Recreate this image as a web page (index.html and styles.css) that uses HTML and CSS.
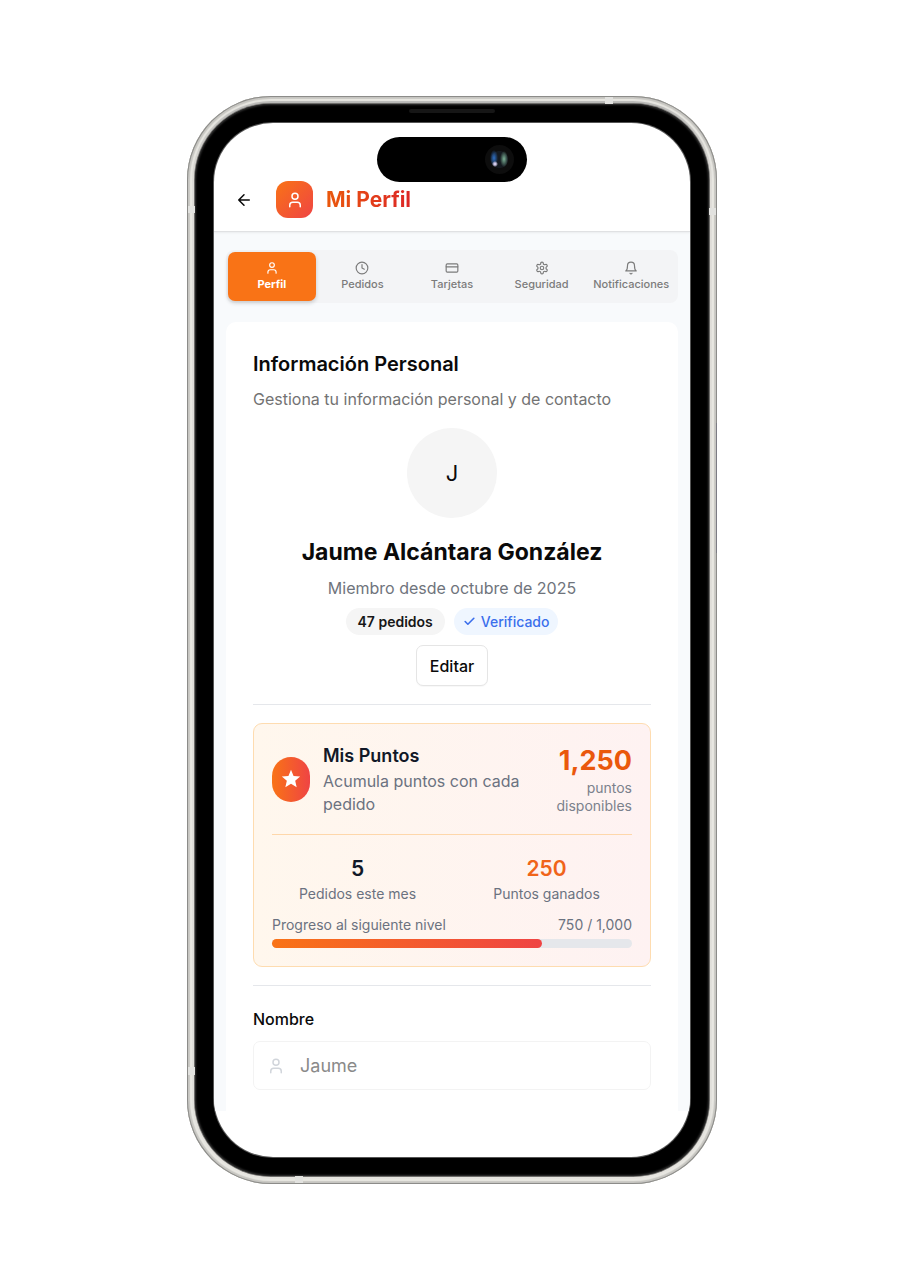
FILE: index.html
```html
<!DOCTYPE html>
<html lang="es">
<head>
<meta charset="utf-8">
<meta name="viewport" content="width=device-width, initial-scale=1">
<title>Mi Perfil</title>
<link rel="stylesheet" href="styles.css">
</head>
<body>
<svg class="sprite" aria-hidden="true">
  <symbol id="person" viewBox="0 0 24 24"><path d="M19 21v-2a4 4 0 0 0-4-4H9a4 4 0 0 0-4 4v2"/><circle cx="12" cy="7" r="4"/></symbol>
</svg>
<div class="phone">
  <span class="antenna antenna-top"></span>
  <span class="antenna antenna-left"></span>
  <span class="antenna antenna-right"></span>
  <span class="antenna antenna-left-low"></span>
  <span class="antenna antenna-bottom"></span>
  <span class="power"></span>
  <div class="bezel">
    <span class="speaker"></span>
    <div class="island"><span class="camera"></span></div>
    <div class="screen">
      <header class="topbar">
        <button class="back" type="button" aria-label="Volver"><svg class="icon" viewBox="0 0 24 24"><path d="m12 19-7-7 7-7M19 12H5"/></svg></button>
        <span class="logo"><svg class="icon" aria-hidden="true"><use href="#person"/></svg></span>
        <h1 class="title">Mi Perfil</h1>
      </header>
      <main class="content">
        <nav class="tabs" aria-label="Secciones">
          <button class="tab active" type="button"><svg class="icon"><use href="#person"/></svg>Perfil</button>
          <button class="tab" type="button"><svg class="icon" viewBox="0 0 24 24"><circle cx="12" cy="12" r="10"/><path d="M12 6v6l4 2"/></svg>Pedidos</button>
          <button class="tab" type="button"><svg class="icon" viewBox="0 0 24 24"><rect x="2" y="5" width="20" height="14" rx="2"/><path d="M2 10h20"/></svg>Tarjetas</button>
          <button class="tab" type="button"><svg class="icon" viewBox="0 0 24 24"><path d="M12.22 2h-.44a2 2 0 0 0-2 2v.18a2 2 0 0 1-1 1.73l-.43.25a2 2 0 0 1-2 0l-.15-.08a2 2 0 0 0-2.73.73l-.22.38a2 2 0 0 0 .73 2.73l.15.1a2 2 0 0 1 1 1.72v.51a2 2 0 0 1-1 1.74l-.15.09a2 2 0 0 0-.73 2.73l.22.38a2 2 0 0 0 2.73.73l.15-.08a2 2 0 0 1 2 0l.43.25a2 2 0 0 1 1 1.73V20a2 2 0 0 0 2 2h.44a2 2 0 0 0 2-2v-.18a2 2 0 0 1 1-1.73l.43-.25a2 2 0 0 1 2 0l.15.08a2 2 0 0 0 2.73-.73l.22-.39a2 2 0 0 0-.73-2.73l-.15-.08a2 2 0 0 1-1-1.74v-.5a2 2 0 0 1 1-1.74l.15-.09a2 2 0 0 0 .73-2.73l-.22-.38a2 2 0 0 0-2.73-.73l-.15.08a2 2 0 0 1-2 0l-.43-.25a2 2 0 0 1-1-1.73V4a2 2 0 0 0-2-2z"/><circle cx="12" cy="12" r="3"/></svg>Seguridad</button>
          <button class="tab" type="button"><svg class="icon" viewBox="0 0 24 24"><path d="M6 8a6 6 0 0 1 12 0c0 7 3 9 3 9H3s3-2 3-9M10.3 21a1.94 1.94 0 0 0 3.4 0"/></svg>Notificaciones</button>
        </nav>
        <section class="card">
          <h2 class="heading">Información Personal</h2>
          <p class="lead">Gestiona tu información personal y de contacto</p>
          <div class="profile">
            <div class="avatar">J</div>
            <h3 class="name">Jaume Alcántara González</h3>
            <p class="since">Miembro desde octubre de 2025</p>
            <div class="badges">
              <span class="badge">47 pedidos</span>
              <span class="badge verified"><svg class="icon" viewBox="0 0 24 24"><path d="M20 6 9 17l-5-5"/></svg>Verificado</span>
            </div>
            <button class="edit" type="button">Editar</button>
          </div>
          <hr class="rule">
          <section class="points">
            <div class="summary">
              <span class="star"><svg viewBox="0 0 24 24"><path d="M12 17.300 18.200 21l-1.640-7.030L22 9.240l-7.190-.61L12 2 9.190 8.630 2 9.240l5.460 4.730L5.820 21z"/></svg></span>
              <div class="about">
                <h4 class="points-title">Mis Puntos</h4>
                <p class="points-text">Acumula puntos con cada pedido</p>
              </div>
              <div class="balance"><strong class="total">1,250</strong><span class="unit">puntos disponibles</span></div>
            </div>
            <div class="stats">
              <div class="stat"><strong class="value">5</strong><span>Pedidos este mes</span></div>
              <div class="stat"><strong class="value earned">250</strong><span>Puntos ganados</span></div>
            </div>
            <div class="level"><span>Progreso al siguiente nivel</span><span>750 / 1,000</span></div>
            <div class="track"><div class="fill" style="width:75%"></div></div>
          </section>
          <hr class="rule">
          <label class="label" for="nombre">Nombre</label>
          <div class="field">
            <svg class="icon" aria-hidden="true"><use href="#person"/></svg>
            <input class="input" id="nombre" type="text" value="Jaume" disabled>
          </div>
        </section>
      </main>
    </div>
  </div>
</div>
</body>
</html>
```
FILE: styles.css
```css
* { box-sizing: border-box; }
body { margin: 0; padding: 96px 16px; background: #fff; color: #0a0a0a; font-family: Inter, "Liberation Sans", sans-serif; }
h1, h2, h3, h4, p { margin: 0; }
button { font: inherit; color: inherit; padding: 0; border: 0; background: none; }
.sprite { position: absolute; width: 0; height: 0; }
.icon { fill: none; stroke: currentColor; stroke-width: 2; stroke-linecap: round; stroke-linejoin: round; flex: none; }

.phone { position: relative; max-width: 530px; margin: 0 auto; padding: 8px; border-radius: 84px; background: linear-gradient(#b5b5b3, #dedcd7 8%, #e0dfda 92%, #e6e4df); box-shadow: inset 0 0 0 1px #8c8c89, inset 0 0 0 2px #c6c5c1, inset 0 0 1px 3px #c9c8c3, inset 0 0 1px 5px #e9e8e3; }
.bezel { position: relative; padding: 19px; border-radius: 76px; background: #000; box-shadow: 0 0 0 1px #6d6c6a, inset 0 0 2px 1px #333; }
.screen { min-height: 1034px; border-radius: 59px; background: #fff; overflow: hidden; box-shadow: 0 0 0 1px #555; }
.antenna { position: absolute; z-index: 1; background: #e2e2df; }
.antenna-top { top: 1px; right: 104px; width: 8px; height: 7px; }
.antenna-left { top: 110px; left: 1px; width: 7px; height: 7px; }
.antenna-right { top: 112px; right: 1px; width: 7px; height: 7px; }
.antenna-left-low { bottom: 109px; left: 1px; width: 7px; height: 8px; }
.antenna-bottom { bottom: 1px; left: 108px; width: 8px; height: 7px; }
.power { position: absolute; top: 327px; right: 0; width: 1px; height: 130px; background: #7c7c84; }
.speaker { position: absolute; top: 5px; left: 50%; width: 86px; height: 4px; margin-left: -43px; border-radius: 2px; background: #161616; }
.island { position: absolute; z-index: 2; top: 33px; left: 50%; width: 150px; height: 45px; margin-left: -75px; padding: 8px 13px; border-radius: 23px; background: #000; display: flex; justify-content: flex-end; }
.camera { width: 29px; height: 29px; border-radius: 50%; background: radial-gradient(circle at 10px 19px, #d5ccec 0 1px, transparent 3px), radial-gradient(ellipse 4px 8px at 19px 14px, #7db397, transparent), radial-gradient(ellipse 4px 8px at 9px 13px, #2e6fc4, transparent), radial-gradient(circle, #151a20 0 8px, #0d0d0d 9px); }

.topbar { position: relative; display: flex; align-items: center; height: 109px; padding: 58px 21px 13px; border-bottom: 1px solid #e0e1e3; box-shadow: 0 1px 2px #0000000f; }
.back { display: flex; width: 18px; margin-right: 23px; }
.back .icon { width: 18px; height: 18px; }
.logo { display: grid; place-items: center; width: 37px; height: 37px; margin-right: 13px; border-radius: 12px; background: linear-gradient(135deg, #f97316, #ef4444); color: #fff; }
.logo .icon { width: 18px; height: 18px; }
.title { font-size: 21px; line-height: 30px; font-weight: 700; background: linear-gradient(90deg, #ea580c, #dc2626); background-clip: text; -webkit-background-clip: text; color: transparent; }

.content { padding: 18px 12px 0; background: #f8fafc; }
.tabs { display: grid; grid-template-columns: repeat(5, minmax(0, 1fr)); height: 53px; padding: 2px; border-radius: 8px; background: #f3f4f6; }
.tab { display: flex; flex-direction: column; align-items: center; justify-content: center; gap: 2px; border-radius: 7px; font-size: 11px; line-height: 15px; font-weight: 500; color: #7b7b7b; }
.tab .icon { width: 14px; height: 14px; }
.tab.active { margin-right: 2px; color: #fff; font-weight: 700; background: #f97316; box-shadow: 0 2px 4px #0000002e; }

.card { margin-top: 19px; padding: 27px 27px 21px; border-radius: 10px 10px 0 0; background: #fff; }
.heading { font-size: 20px; line-height: 30px; font-weight: 600; }
.lead, .since { font-size: 16px; line-height: 24px; color: #737373; }
.lead { margin-top: 8px; }
.profile { display: flex; flex-direction: column; align-items: center; margin-top: 17px; }
.avatar { display: grid; place-items: center; width: 90px; height: 90px; border-radius: 50%; background: #f5f5f5; font-size: 22px; }
.name { margin-top: 18px; font-size: 23px; line-height: 32px; font-weight: 700; }
.since { margin-top: 8px; color: #6f747c; }
.badges { display: flex; gap: 9px; margin-top: 8px; }
.badge { display: flex; align-items: center; gap: 5px; height: 27px; padding: 0 12px; border-radius: 14px; background: #f5f5f5; font-size: 14px; font-weight: 600; color: #171717; }
.verified { padding: 0 9px; background: #eff6ff; color: #3b6fec; font-weight: 500; }
.verified .icon { width: 13px; height: 13px; stroke-width: 3; }
.edit { margin-top: 10px; height: 41px; padding: 0 13px; border: 1px solid #e5e5e5; border-radius: 7px; background: #fff; font-size: 16px; font-weight: 500; box-shadow: 0 1px 1px #00000008; }
.rule { height: 1px; margin: 18px 0; border: 0; background: #e5e7eb; }

.points { padding: 18px; border: 1px solid #fedcb0; border-radius: 9px; background: linear-gradient(90deg, #fff7ed, #fef2f2); color: #6b7280; font-size: 14px; line-height: 18px; }
.summary { display: flex; align-items: center; gap: 13px; padding-bottom: 18px; border-bottom: 1px solid #fed7aa; }
.star { display: grid; place-items: center; flex: none; width: 38px; height: 45px; border-radius: 19px; background: linear-gradient(90deg, #f97316, #ef4444); }
.star svg { width: 22px; height: 22px; fill: #fff; }
.about { flex: 1; }
.points-title { font-size: 18px; line-height: 28px; font-weight: 600; color: #111827; }
.points-text { font-size: 16px; line-height: 23px; }
.balance { display: flex; flex-direction: column; width: 76px; text-align: right; }
.total { font-size: 27px; line-height: 36px; font-weight: 700; color: #ea580c; }
.unit { font-size: 14px; color: #7b818c; }
.stats { display: grid; grid-template-columns: 1fr 1fr; gap: 18px; margin: 18px 0 13px; text-align: center; }
.stat { display: flex; flex-direction: column; }
.value { font-size: 21px; line-height: 32px; font-weight: 600; color: #111827; }
.earned { color: #f0641a; }
.level { display: flex; justify-content: space-between; }
.track { height: 9px; margin-top: 5px; border-radius: 5px; background: #e5e7eb; }
.fill { height: 100%; border-radius: 5px; background: linear-gradient(90deg, #f97316, #ef4444); }

.label { display: block; margin-top: 23px; font-size: 16px; line-height: 20px; font-weight: 500; }
.field { display: flex; align-items: center; gap: 15px; height: 49px; margin-top: 12px; padding: 0 13px; border: 1px solid #f3f3f3; border-radius: 7px; color: #d1d5db; }
.field .icon { width: 18px; height: 18px; }
.input { flex: 1; min-width: 0; padding: 0; border: 0; background: none; font: inherit; font-size: 18px; color: #8a8a8a; }
```
